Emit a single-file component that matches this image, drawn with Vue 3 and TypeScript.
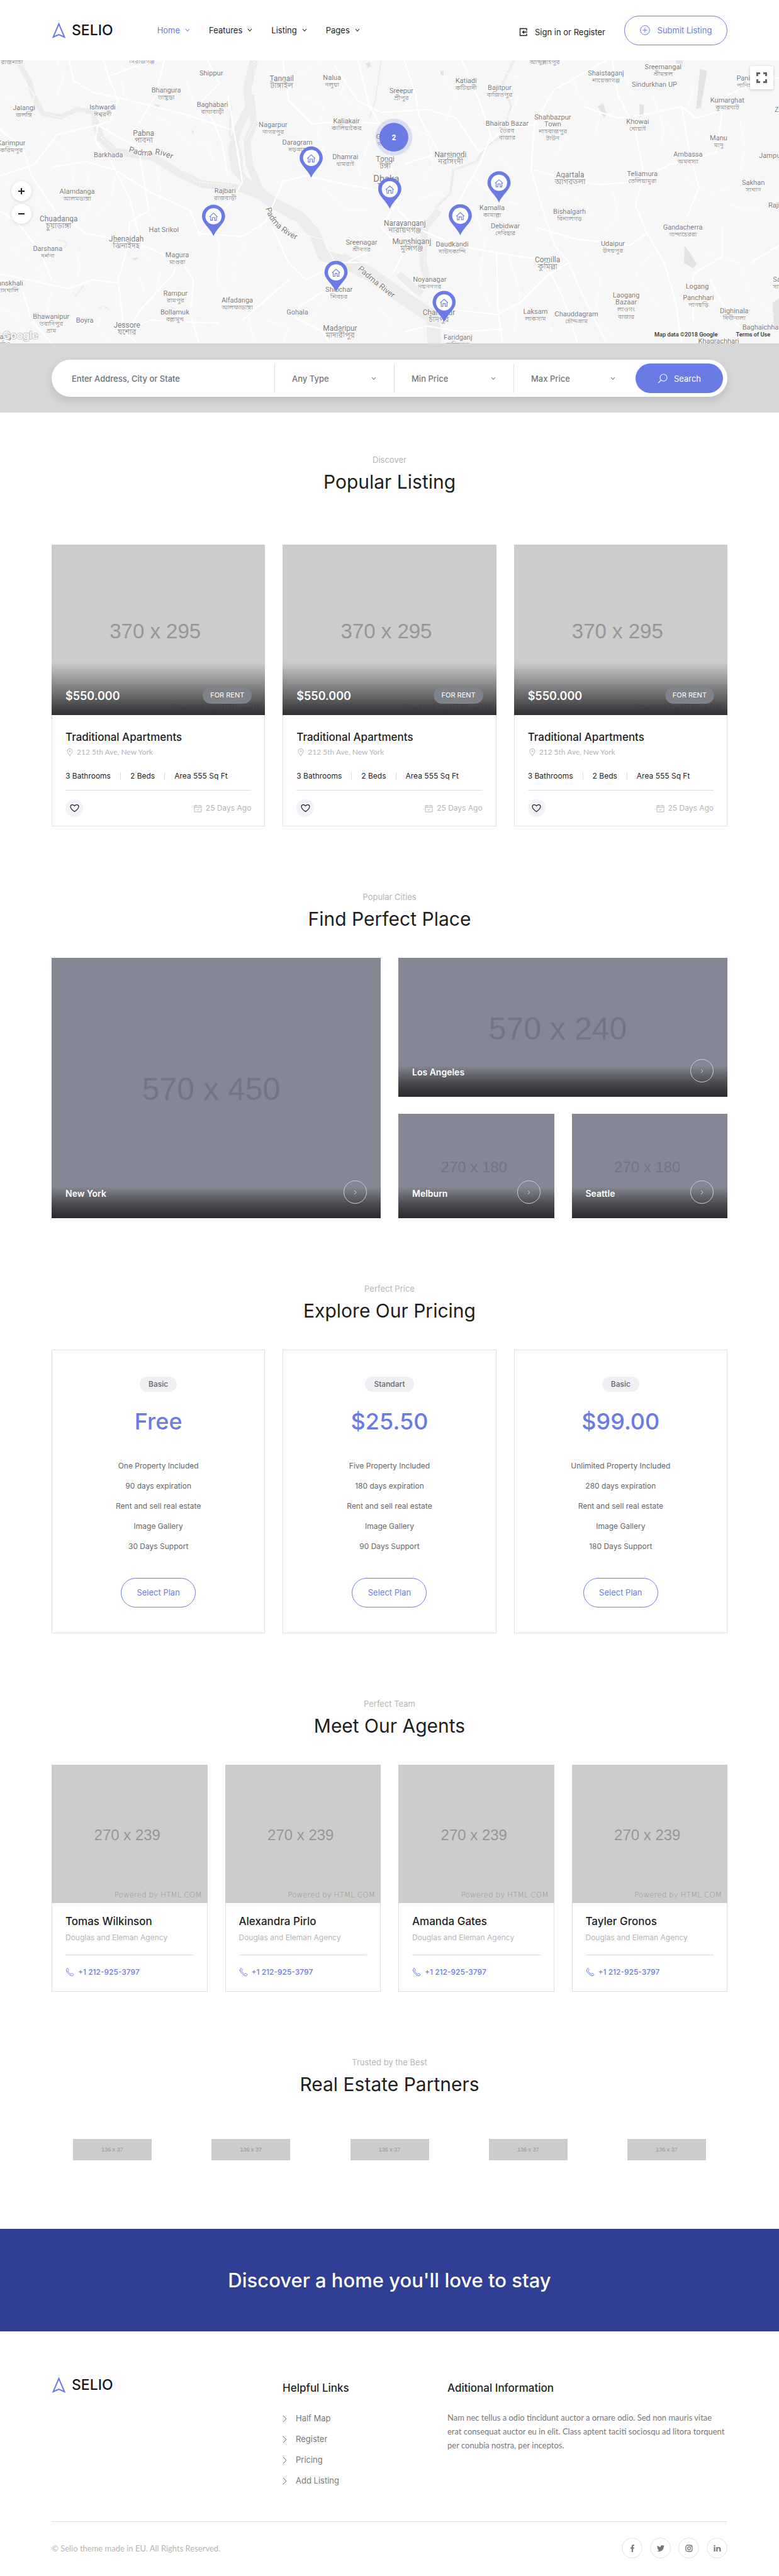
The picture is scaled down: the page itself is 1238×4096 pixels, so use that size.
<script setup lang="ts">
interface MapLabel {
  x: number
  y: number
  lines: string[]
  local?: string[]
  size?: 'big' | 'city'
  start?: boolean
}

const labels: MapLabel[] = [
  { x: 21, y: -9, lines: [], local: ['রাজশাহী'] },
  { x: 246, y: -11, lines: [], local: ['সিরাজগঞ্জ'] },
  { x: 943, y: -10, lines: [], local: ['আব্দুল্লাহপুর'] },
  { x: 366, y: 22, lines: ['Shippur'] },
  { x: 488, y: 32, lines: ['Tangail'], local: ['টাঙ্গাইল'], size: 'big' },
  { x: 575, y: 30, lines: ['Nalua'], local: ['নলুয়া'] },
  { x: 288, y: 51, lines: ['Bhangura'], local: ['ভাঙ্গুড়া'] },
  { x: 368, y: 77, lines: ['Baghabari'], local: ['বাঘাবাড়ী'] },
  { x: 42, y: 82, lines: ['Jalangi'], local: ['জলঙ্গি'] },
  { x: 178, y: 81, lines: ['Ishwardi'], local: ['ঈশ্বরদী'] },
  { x: 473, y: 111, lines: ['Nagarpur'], local: ['নাগরপুর'] },
  { x: 600, y: 105, lines: ['Kaliakair'], local: ['কালিয়াকৈর'] },
  { x: 249, y: 127, lines: ['Pabna'], local: ['পাবনা'], size: 'big' },
  { x: 20, y: 143, lines: ['Karimpur'], local: ['করিমপুর'] },
  { x: 188, y: 164, lines: ['Barkhada'] },
  { x: 515, y: 142, lines: ['Daragram'], local: ['দড়গ্রাম'] },
  { x: 598, y: 167, lines: ['Dhamrai'], local: ['ধামরাই'] },
  { x: 672, y: 132, lines: ['Gazipur'], local: ['গাজীপুর'] },
  { x: 667, y: 171, lines: ['Tongi'], local: ['টঙ্গী'], size: 'big' },
  { x: 669, y: 206, lines: ['Dhaka'], local: ['ঢাকা'], size: 'city' },
  { x: 134, y: 227, lines: ['Alamdanga'], local: ['আলমডাঙ্গা'] },
  { x: 390, y: 226, lines: ['Rajbari'], local: ['রাজবাড়ী'] },
  { x: 1148, y: 11, lines: ['Sreemangal'], local: ['শ্রীমঙ্গল'] },
  { x: 1049, y: 22, lines: ['Shaistaganj'], local: ['শায়েস্তাগঞ্জ'] },
  { x: 1133, y: 42, lines: ['Sindurkhan UP'] },
  { x: 807, y: 35, lines: ['Katiadi'], local: ['কটিয়াদী'] },
  { x: 865, y: 47, lines: ['Bajitpur'], local: ['বাজিতপুর'] },
  { x: 1275, y: 31, lines: ['Panisagar'], local: ['পানিসাগর'], start: true },
  { x: 695, y: 53, lines: ['Sreepur'], local: ['শ্রীপুর'] },
  { x: 1259, y: 69, lines: ['Kumarghat'], local: ['কুমারঘাট'] },
  { x: 1341, y: 85, lines: ['Zampui'], start: true },
  { x: 957, y: 98, lines: ['Shahbazpur', 'Town'], local: ['শাহবাজপুর', 'টাউন'] },
  { x: 1104, y: 106, lines: ['Khowai'], local: ['খোয়াই'] },
  { x: 878, y: 109, lines: ['Bhairab Bazar'], local: ['ভৈরব', 'বাজার'] },
  { x: 1244, y: 134, lines: ['Manu'], local: ['মানু'] },
  { x: 1191, y: 163, lines: ['Ambassa'], local: ['অমবস্যা'] },
  { x: 1314, y: 165, lines: ['Jampui Hills'], start: true },
  { x: 780, y: 164, lines: ['Narsingdi'], local: ['নরসিংদী'], size: 'big' },
  { x: 987, y: 199, lines: ['Agartala'], local: ['আগরতলা'], size: 'big' },
  { x: 1112, y: 196, lines: ['Teliamura'], local: ['তেলিয়ামুরা'] },
  { x: 1304, y: 212, lines: ['Sakhan'], local: ['সাখান'] },
  { x: 852, y: 255, lines: ['Kamalla'], local: ['কামাল্লা'] },
  { x: 102, y: 275, lines: ['Chuadanga'], local: ['চুয়াডাঙ্গা'], size: 'big' },
  { x: 284, y: 293, lines: ['Hat Srikol'] },
  { x: 219, y: 310, lines: ['Jhenaidah'], local: ['ঝিনাইদহ'], size: 'big' },
  { x: 83, y: 326, lines: ['Darshana'], local: ['দর্শনা'] },
  { x: 307, y: 337, lines: ['Magura'], local: ['মাগুরা'] },
  { x: 14, y: 386, lines: ['Hanskhali'], local: ['হাঁসখালি'] },
  { x: 304, y: 403, lines: ['Rampur'], local: ['রামপুর'] },
  { x: 411, y: 415, lines: ['Alfadanga'], local: ['আলফাডাঙ্গা'] },
  { x: 515, y: 436, lines: ['Gohala'] },
  { x: 303, y: 436, lines: ['Bollamuk'], local: ['বল্লামুখ'] },
  { x: 89, y: 444, lines: ['Bhawanipur'], local: ['ভবানিপুর', 'গ্রাম'] },
  { x: 147, y: 450, lines: ['Boyra'] },
  { x: 220, y: 459, lines: ['Jessore'], local: ['যশোর'], size: 'big' },
  { x: 589, y: 464, lines: ['Madaripur'], local: ['মাদারীপুর'], size: 'big' },
  { x: 587, y: 397, lines: ['Shibchar'], local: ['শিবচর'] },
  { x: 626, y: 315, lines: ['Sreenagar'], local: ['শ্রীনগর'] },
  { x: 0, y: 478, lines: ['angs'], local: ['গাঁও'], start: true },
  { x: 701, y: 282, lines: ['Narayanganj'], local: ['নারায়ণগঞ্জ'], size: 'big' },
  { x: 713, y: 314, lines: ['Munshiganj'], local: ['মুন্সিগঞ্জ'], size: 'big' },
  { x: 783, y: 318, lines: ['Daudkandi'], local: ['দাউদকান্দি'] },
  { x: 875, y: 287, lines: ['Debidwar'], local: ['দেবিদ্বার'] },
  { x: 986, y: 262, lines: ['Bishalgarh'], local: ['বিশালগড়'] },
  { x: 1330, y: 251, lines: ['Rajib'], start: true },
  { x: 1182, y: 289, lines: ['Gandacherra'], local: ['গান্দাচেররা'] },
  { x: 1061, y: 317, lines: ['Udaipur'], local: ['উদয়পুর'] },
  { x: 948, y: 346, lines: ['Comilla'], local: ['কুমিল্লা'], size: 'big' },
  { x: 744, y: 379, lines: ['Noyanagar'], local: ['নয়ননগর'] },
  { x: 1207, y: 391, lines: ['Logang'] },
  { x: 1084, y: 407, lines: ['Laogang', 'Bazaar'], local: ['লাওগং', 'বাজার'] },
  { x: 1209, y: 411, lines: ['Panchhari'], local: ['পানছড়ি'] },
  { x: 760, y: 437, lines: ['Chandpur'], local: ['চাঁদপুর'], size: 'big' },
  { x: 927, y: 435, lines: ['Laksam'], local: ['লাকসাম'] },
  { x: 998, y: 439, lines: ['Chauddagram'], local: ['চৌদ্দগ্রাম'] },
  { x: 1271, y: 434, lines: ['Dighinala'], local: ['দিঘীনালা'] },
  { x: 1285, y: 462, lines: ['Baghaichhari'], start: true },
  { x: 1244, y: 486, lines: ['Khagrachhari'] },
  { x: 793, y: 479, lines: ['Faridganj'], local: ['ফরিদগঞ্জ'] },
  { x: 1338, y: 379, lines: ['Sajek'], local: ['সাজেক'], start: true },
]

const pins = [
  [539, 149],
  [675, 203],
  [864, 192],
  [370, 250],
  [797, 249],
  [582, 347],
  [769, 399],
]

const roads: string[] = [
  'M120 0 L128 35 L160 55 L220 68 L330 96 L400 120',
  'M180 0 L188 28 L240 8 L280 0',
  'M188 28 L205 70 L190 105 L170 112 L100 128 L60 180 L0 200',
  'M170 112 L210 135 L240 150 L250 210 L258 260 L225 280 L222 320 L205 380 L215 470 L240 490',
  'M170 112 L165 140 L190 170 L225 240 L240 300',
  'M285 0 L270 60 L240 110',
  'M360 0 L380 40 L350 70 L372 110 L385 145 L395 200',
  'M0 120 L40 150 L55 200 L95 260 L150 300 L205 310 L260 325 L300 345',
  'M90 185 L150 175 L200 190 L260 228 L330 260 L345 300 L420 305 L460 280 L490 210 L530 200 L600 215 L655 225',
  'M310 340 L300 370 L245 430 L220 470',
  'M310 340 L335 380 L330 440 L345 490',
  'M395 60 L420 210 L400 245 L345 300',
  'M470 285 L500 350 L530 380 L590 350 L640 350',
  'M560 400 L520 425 L510 445 L560 470 L570 490',
  'M420 450 L460 415 L500 380',
  'M210 470 L260 450 L310 452 L380 455',
  'M490 0 L500 70 L540 110 L600 105 L660 110 L700 130',
  'M620 0 L640 80 L670 130 L680 200 L690 260 L720 290 L790 320 L870 335 L940 345',
  'M580 10 L620 70 L660 90 L740 85 L790 100 L830 160 L870 120 L930 110',
  'M700 0 L720 60 L725 95 L760 160 L700 180',
  'M800 0 L830 70 L850 130 L830 180 L780 270',
  'M1050 0 L960 50 L925 110 L920 190 L940 260 L960 320 L985 350 L1010 410 L1050 490',
  'M1010 80 L1070 100 L1110 95 L1180 80 L1205 100 L1240 90 L1260 60 L1300 40 L1349 30',
  'M1180 80 L1190 140 L1210 220 L1190 270',
  'M925 190 L1000 210 L1040 215 L1100 210 L1160 180 L1240 160 L1250 90',
  'M930 290 L1000 310 L1090 320 L1120 300 L1150 350 L1170 420 L1180 490',
  'M1120 300 L1100 250 L1115 200 L1100 120 L1070 60 L1060 0',
  'M690 240 L660 290 L700 330 L680 370',
  'M770 430 L860 440 L900 420 L950 370 L985 350',
  'M860 330 L862 430 L870 490',
  'M940 345 L970 400 L985 440 L1000 490',
  'M1250 290 L1250 340 L1200 370 L1200 450',
  'M1230 380 L1260 440 L1300 480',
  'M1300 350 L1349 320',
  'M0 370 L50 380 L95 390 L120 395 L160 380 L205 385',
  'M40 400 L55 450 L90 490',
  'M0 260 L30 280 L70 330 L90 380',
  'M640 330 L600 350',
  'M700 470 L740 460 L800 470 L870 465',
]

const lanes: string[] = [
  'M30 20 L60 60 L45 110 L20 130 M100 0 L110 30 L95 70 M210 30 L215 60 L250 90 L300 110 M320 20 L330 60 L350 100',
  'M0 60 L30 70 L60 110 M70 120 L110 150 L130 190 L120 240 M150 190 L160 240 L140 280 L100 300 M200 200 L190 250 L160 270',
  'M270 180 L280 230 L260 270 L290 310 M300 120 L330 150 L360 140 L370 180 M10 210 L60 230 L80 270 L60 310 L20 330',
  'M20 330 L60 350 L90 400 L80 440 M130 320 L140 360 L120 400 L150 440 M240 330 L280 360 L270 400 M180 420 L170 460 L190 490',
  'M360 260 L380 320 L375 380 L400 420 M430 310 L400 360 L410 390 M470 260 L450 290 M520 300 L560 310 L580 350 L570 400 L530 460',
  'M460 20 L510 30 L560 0 M520 60 L560 80 L550 130 L570 180 M600 30 L590 60 L630 90 M640 140 L620 190 L640 230 M560 220 L600 260 L640 260',
  'M700 110 L740 130 L750 180 L730 210 M760 20 L790 60 L770 110 M720 240 L760 230 L800 250 L810 300 M640 280 L620 300 L660 330 M820 200 L860 240 L900 250',
  'M820 260 L840 310 L830 380 L850 430 M880 340 L900 400 L890 470 M960 90 L980 130 L960 170 M990 20 L1000 60 L1040 90 L1030 130 M1080 20 L1100 70',
  'M1130 60 L1150 120 L1140 160 M1160 20 L1200 50 L1190 80 M1280 100 L1290 150 L1280 200 L1320 240 M1060 220 L1070 270 L1040 300 M950 220 L1000 240 L1030 270',
  'M1010 330 L1040 380 L1030 440 L1060 480 M1130 330 L1100 370 L1140 430 M1180 200 L1230 230 L1270 220 M1260 250 L1300 260 L1349 240 M1210 330 L1280 350 L1300 410 L1340 440',
  'M1150 100 L1180 150 M940 430 L960 480 M900 60 L880 100 M1200 120 L1230 140 M430 440 L440 490 M460 450 L500 460 L490 490 M640 420 L680 450 L660 490 M590 420 L620 440',
  'M240 370 L250 400 M100 440 L130 450 M0 430 L30 440 L40 470 M690 380 L720 410 M870 20 L900 30 M860 160 L890 190 L880 220',
]

const menu = ['Home', 'Features', 'Listing', 'Pages']
const filters = ['Any Type', 'Min Price', 'Max Price']
const listings = [1, 2, 3]
const plans = [
  { tag: 'Basic', price: 'Free', items: ['One Property Included', '90 days expiration', 'Rent and sell real estate', 'Image Gallery', '30 Days Support'] },
  { tag: 'Standart', price: '$25.50', items: ['Five Property Included', '180 days expiration', 'Rent and sell real estate', 'Image Gallery', '90 Days Support'] },
  { tag: 'Basic', price: '$99.00', items: ['Unlimited Property Included', '280 days expiration', 'Rent and sell real estate', 'Image Gallery', '180 Days Support'] },
]
const cities = [
  { name: 'New York', size: '570 x 450', area: 'tall' },
  { name: 'Los Angeles', size: '570 x 240', area: 'wide' },
  { name: 'Melburn', size: '270 x 180', area: 'small' },
  { name: 'Seattle', size: '270 x 180', area: 'small' },
]
const agents = ['Tomas Wilkinson', 'Alexandra Pirlo', 'Amanda Gates', 'Tayler Gronos']
const partners = [1, 2, 3, 4, 5]
const links = ['Half Map', 'Register', 'Pricing', 'Add Listing']
</script>

<template>
  <div class="page">
    <header class="container header">
      <a class="logo" href="#">
        <svg width="23" height="26" viewBox="0 0 23 26" fill="none" stroke="#6a7be6" stroke-width="2"><path d="M11.500 3 L20.500 24 L11.500 20 L2.500 24 Z" /></svg>
        <span>SELIO</span>
      </a>
      <nav class="nav">
        <a v-for="(m, i) in menu" :key="m" href="#" :class="{ active: i === 0 }">
          {{ m }}
          <svg class="chev" width="8" height="6" viewBox="0 0 8 6"><path d="M1 1 L4 4.500 L7 1" /></svg>
        </a>
      </nav>
      <a class="signin" href="#">
        <svg width="14" height="14" viewBox="0 0 14 14" fill="none" stroke="#1e1e1e" stroke-width="1.300"><path d="M12 5 V1.500 H1.500 V12.500 H12 V9.500 M13 7 H5.500 M8 4.700 L5.500 7 L8 9.300" /></svg>
        Sign in or Register
      </a>
      <a class="submit" href="#">
        <svg width="16" height="16" viewBox="0 0 16 16" fill="none" stroke="#6a7be6" stroke-width="1"><circle cx="8" cy="8" r="7.300" /><path d="M8 4.500 V11.500 M4.500 8 H11.500" /></svg>
        Submit Listing
      </a>
    </header>

    <section class="map">
      <svg class="canvas" viewBox="0 0 1349 490" preserveAspectRatio="xMidYMid slice">
        <g class="water">
          <path stroke-width="9" d="M30 0 L52 38 L58 62 L75 92 L105 98 L135 85 L162 90 L170 130 L195 155" />
          <path stroke-width="13" d="M165 105 L175 135 L200 158 L265 167 L310 195 L350 214 L420 222 L455 236" />
          <path stroke-width="20" d="M430 215 L470 245 L520 272 L545 300 L560 338 L610 352" />
          <path stroke-width="24" d="M590 345 L640 370 L690 405 L750 445 L752 490" />
          <path stroke-width="14" d="M440 0 L428 50 L432 80 L412 120 L402 155 L408 190 L440 225" />
          <path stroke-width="12" d="M434 60 L440 110 L428 140 L432 180 L455 235" />
          <path stroke-width="4" d="M400 80 L398 130 L415 150 L420 190" />
          <path stroke-width="12" d="M760 260 L735 290 L732 350 L740 380 M690 370 L730 405" />
          <path stroke-width="4" d="M890 0 L870 40 L885 80 L870 130 L840 150 L825 175 L785 190 L780 230 L755 255" />
          <path stroke-width="2" d="M660 0 L650 70 L640 100 M145 390 L130 410 M100 310 L116 315 L112 325 M170 430 L180 425 L190 432" />
        </g>
        <g class="lakes">
          <path d="M1212 15 L1224 18 L1213 82 L1205 84 Z M1035 80 L1044 74 L1050 92 L1046 100 Z M1107 75 L1115 78 L1114 95 L1107 100 Z M1185 320 L1192 330 L1206 352 L1200 360 L1184 350 Z M268 75 L277 77 L275 83 L270 82 Z M633 5 L641 3 L642 10 L637 13 Z M331 120 L336 123 L335 129 Z M762 18 h6 v8 h-6 Z M1337 420 L1349 412 V470 L1340 460 Z M228 342 L241 342 L234 347 Z M1170 0 h12 v6 h-12 Z" />
        </g>
        <g class="lanes"><path v-for="r in lanes" :key="r" :d="r" /></g>
        <g class="roads"><path v-for="r in roads" :key="r" :d="r" /></g>
        <path class="border" d="M90 95 L110 100 L140 88 L160 95 L172 130 L200 155 M300 180 L340 210 L400 216 L430 200 L410 160 L430 130 L445 100 L440 0 M340 300 L370 310 L378 380 L400 400 L410 460 M735 310 L735 360 M780 190 L830 185 L885 85 L900 60" />
        <defs>
          <path id="river-a" d="M222 158 Q250 168 262 164 T300 172" />
          <path id="river-b" d="M460 256 Q468 292 520 314" />
          <path id="river-c" d="M619 362 Q650 390 684 415" />
        </defs>
        <text class="river"><textPath href="#river-a">Padma River</textPath></text>
        <text class="river"><textPath href="#river-b">Padma River</textPath></text>
        <text class="river"><textPath href="#river-c">Padma River</textPath></text>
        <g v-for="(l, i) in labels" :key="i" class="label" :class="[l.size, { start: l.start }]">
          <text v-for="(t, n) in l.lines" :key="t" :x="l.x" :y="l.y + 4 + n * 12">{{ t }}</text>
          <text v-for="(t, n) in l.local" :key="t" class="local" :x="l.x" :y="l.y + 4 + (l.lines.length || 1) * 12 + n * 12">{{ t }}</text>
        </g>
        <text class="google" x="5" y="482">Google</text>
        <g class="credit">
          <text x="1133" y="478">Map data ©2018 Google</text>
          <text x="1274" y="478">Terms of Use</text>
        </g>
        <g class="cluster">
          <circle cx="682" cy="133" r="32" class="halo" />
          <circle cx="682" cy="133" r="25" class="core" />
          <text x="682" y="138">2</text>
        </g>
        <g v-for="p in pins" :key="p[0]" :transform="`translate(${p[0]} ${p[1]})`">
          <path fill="#6a7be6" d="M0 54 C-6 40 -20 32 -20 20 A20 20 0 0 1 20 20 C20 32 6 40 0 54 Z" />
          <circle cy="20" r="14" fill="#fff" />
          <path fill="none" stroke="#6a7be6" stroke-width="1.200" d="M-7 21 L0 14.500 L7 21 M-5 20 V27 H-2 V22 H2 V27 H5 V20" />
        </g>
      </svg>
      <div class="zoom">
        <button type="button" aria-label="Zoom in"><svg width="12" height="12" viewBox="0 0 12 12" stroke="#222" stroke-width="2"><path d="M1 6 H11 M6 1 V11" /></svg></button>
        <button type="button" aria-label="Zoom out"><svg width="12" height="12" viewBox="0 0 12 12" stroke="#222" stroke-width="2"><path d="M1 6 H11" /></svg></button>
      </div>
      <button class="full" type="button" aria-label="Full screen">
        <svg width="17" height="17" viewBox="0 0 17 17" fill="none" stroke="#666" stroke-width="3"><path d="M1.500 6 V1.500 H6 M11 1.500 H15.500 V6 M15.500 11 V15.500 H11 M6 15.500 H1.500 V11" /></svg>
      </button>
    </section>

    <section class="search">
      <form class="bar container" @submit.prevent>
        <input type="text" aria-label="Address" placeholder="Enter Address, City or State" />
        <div v-for="f in filters" :key="f" class="filter">
          <select :aria-label="f"><option>{{ f }}</option></select>
          <svg class="chev" width="8" height="6" viewBox="0 0 8 6"><path d="M1 1 L4 4.500 L7 1" /></svg>
        </div>
        <button type="submit">
          <svg width="16" height="16" viewBox="0 0 16 16" fill="none" stroke="#fff" stroke-width="1.100"><circle cx="9.500" cy="6.500" r="5.500" /><path d="M5.500 10.500 L1 15" /></svg>
          Search
        </button>
      </form>
    </section>

    <section class="container block first">
      <div class="head"><p>Discover</p><h2>Popular Listing</h2></div>
      <div class="thirds">
        <article v-for="n in listings" :key="n" class="card">
          <div class="photo listing">
            <span class="dims">370 x 295</span>
            <span class="powered">Powered by HTML.COM</span>
            <div class="shade"><strong>$550.000</strong><span class="rent">FOR RENT</span></div>
          </div>
          <div class="info">
            <h3>Traditional Apartments</h3>
            <p class="address">
              <svg width="10" height="13" viewBox="0 0 10 13" fill="none" stroke="#b5b5b5"><path d="M5 12 C4 9 1 7 1 4.500 A4 4 0 0 1 9 4.500 C9 7 6 9 5 12 Z" /><circle cx="5" cy="4.500" r="1" /></svg>
              212 5th Ave, New York
            </p>
            <ul class="specs"><li>3 Bathrooms</li><li>2 Beds</li><li>Area 555 Sq Ft</li></ul>
            <div class="foot">
              <button type="button" class="like" aria-label="Save">
                <svg width="15" height="14" viewBox="0 0 15 14" fill="none" stroke="#222" stroke-width="1.200"><path d="M7.500 12.500 C4 10 1 7.500 1 4.700 C1 1.500 5 .3 7.500 3.500 C10 .3 14 1.500 14 4.700 C14 7.500 11 10 7.500 12.500 Z" /></svg>
              </button>
              <span class="date">
                <svg width="13" height="13" viewBox="0 0 13 13" fill="none" stroke="#b5b5b5"><path d="M1 2 H12 V12 H1 Z M1 4.500 H12 M3.500 .5 V3 M9.500 .5 V3 M4.500 8 L6 9.500 L8.500 6.500" /></svg>
                25 Days Ago
              </span>
            </div>
          </div>
        </article>
      </div>
    </section>

    <section class="container block">
      <div class="head"><p>Popular Cities</p><h2>Find Perfect Place</h2></div>
      <div class="cities">
        <a v-for="c in cities" :key="c.name" href="#" class="photo city" :class="c.area">
          <span class="dims">{{ c.size }}</span>
          <span class="powered">Powered by HTML.COM</span>
          <span class="fade"></span>
          <strong>{{ c.name }}</strong>
          <span class="go"><svg width="5" height="8" viewBox="0 0 5 8" fill="none" stroke="#cfcfd4"><path d="M1 1 L4 4 L1 7" /></svg></span>
        </a>
      </div>
    </section>

    <section class="container block">
      <div class="head"><p>Perfect Price</p><h2>Explore Our Pricing</h2></div>
      <div class="thirds">
        <article v-for="(p, i) in plans" :key="i" class="card plan">
          <span class="tag">{{ p.tag }}</span>
          <h3>{{ p.price }}</h3>
          <ul><li v-for="t in p.items" :key="t">{{ t }}</li></ul>
          <a href="#">Select Plan</a>
        </article>
      </div>
    </section>

    <section class="container block">
      <div class="head"><p>Perfect Team</p><h2>Meet Our Agents</h2></div>
      <div class="quarters">
        <article v-for="a in agents" :key="a" class="card">
          <div class="photo agent"><span class="dims">270 x 239</span><span class="powered">Powered by HTML.COM</span></div>
          <div class="bio">
            <h3>{{ a }}</h3>
            <p>Douglas and Eleman Agency</p>
            <a href="tel:+12129253797">
              <svg width="14" height="14" viewBox="0 0 14 14" fill="none" stroke="#6a7be6"><path d="M1.500 2.500 L3 1 C4 .6 5 2.500 5 3.500 C5 4.500 4 4.500 4 5.200 C4.500 7 7 9.500 8.800 10 C9.500 10 9.500 9 10.500 9 C11.500 9 13.400 10 13 11 L11.500 12.500 C8 14 0 6 1.500 2.500 Z" /></svg>
              +1 212-925-3797
            </a>
          </div>
        </article>
      </div>
    </section>

    <section class="container block last">
      <div class="head"><p>Trusted by the Best</p><h2>Real Estate Partners</h2></div>
      <div class="partners"><div v-for="n in partners" :key="n"><span>136 x 37</span></div></div>
    </section>

    <section class="banner"><h2>Discover a home you'll love to stay</h2></section>

    <footer class="container footer">
      <div class="cols">
        <a class="logo" href="#">
          <svg width="23" height="26" viewBox="0 0 23 26" fill="none" stroke="#6a7be6" stroke-width="2"><path d="M11.500 3 L20.500 24 L11.500 20 L2.500 24 Z" /></svg>
          <span>SELIO</span>
        </a>
        <div class="col">
          <h3>Helpful Links</h3>
          <ul>
            <li v-for="l in links" :key="l">
              <a href="#"><svg width="7" height="12" viewBox="0 0 7 12" fill="none" stroke="#777"><path d="M1 1 L6 6 L1 11" /></svg>{{ l }}</a>
            </li>
          </ul>
        </div>
        <div class="col">
          <h3>Aditional Information</h3>
          <p>Nam nec tellus a odio tincidunt auctor a ornare odio. Sed non mauris vitae erat consequat auctor eu in elit. Class aptent taciti sociosqu ad litora torquent per conubia nostra, per inceptos.</p>
        </div>
      </div>
      <div class="bottom">
        <p>© Selio theme made in EU. All Rights Reserved.</p>
        <div class="social">
          <a href="#" aria-label="Facebook"><svg width="12" height="12" viewBox="0 0 12 12" fill="#777"><path d="M4.800 12 V6.600 H3 V4.500 H4.800 V3 C4.800 1 6 .1 7.600 .1 L9 .2 V2 H8 C7.200 2 7 2.400 7 3 V4.500 H9 L8.700 6.600 H7 V12 Z" /></svg></a>
          <a href="#" aria-label="Twitter"><svg width="12" height="12" viewBox="0 0 12 12" fill="#777"><path d="M12 2.500 L10.800 3.600 C10.800 8 7.800 11 4 11 C2.500 11 1 10.600 0 9.900 C1.300 10 2.500 9.700 3.500 8.900 C2.400 8.800 1.500 8.100 1.200 7.100 H2.300 C1.100 6.800 .4 5.800 .4 4.600 L1.500 4.900 C.4 4.100 .1 2.700 .8 1.600 C2.100 3.100 3.900 4 5.900 4.100 C5.500 2.500 6.700 1 8.300 1 C9 1 9.700 1.300 10.100 1.800 L11.700 1.200 L10.700 2.600 Z" /></svg></a>
          <a href="#" aria-label="Instagram"><svg width="12" height="12" viewBox="0 0 12 12" fill="none" stroke="#777" stroke-width="1.300"><rect x="1" y="1" width="10" height="10" rx="3" /><circle cx="6" cy="6" r="2.400" /><circle cx="8.900" cy="3.100" r=".3" /></svg></a>
          <a href="#" aria-label="LinkedIn"><svg width="12" height="12" viewBox="0 0 12 12" fill="#777"><path d="M.5 4 H2.700 V11 H.5 Z M1.600 .8 A1.200 1.200 0 1 1 1.590 .8 Z M4.200 4 H6.300 V5 C7.500 3.300 11.500 3.300 11.500 7 V11 H9.300 V7.300 C9.300 5.200 6.400 5.300 6.400 7.300 V11 H4.200 Z" /></svg></a>
        </div>
      </div>
    </footer>
  </div>
</template>

<style>
body {
  margin: 0;
  background: #fff;
}
</style>

<style scoped>
.page {
  font-family: Inter, "Noto Sans", sans-serif;
  font-size: 13px;
  line-height: 20px;
  color: #1e1e1e;
}
.page * {
  box-sizing: border-box;
}
h2, h3, p, ul {
  margin: 0;
  padding: 0;
  font-weight: 400;
}
ul {
  list-style: none;
}
a {
  color: inherit;
  text-decoration: none;
}
button, input, select {
  font: inherit;
  border: 0;
  background: none;
  padding: 0;
}
svg {
  flex: none;
}
.container {
  width: calc(100% - 60px);
  max-width: 1074px;
  margin: 0 auto;
}
.chev {
  fill: none;
  stroke: currentColor;
  stroke-width: 1.1;
}
.header {
  display: flex;
  align-items: center;
  height: 96px;
}
.logo {
  display: flex;
  align-items: center;
  gap: 9px;
  height: 26px;
  font-size: 23px;
  font-weight: 500;
  color: #16161a;
}
.nav {
  display: flex;
  gap: 30px;
  margin-left: 70px;
}
.nav a {
  display: flex;
  align-items: center;
  gap: 8px;
}
.nav .active {
  color: #6a7be6;
}
.signin {
  display: flex;
  align-items: center;
  gap: 11px;
  margin-left: auto;
  padding-top: 5px;
}
.submit {
  display: flex;
  align-items: center;
  justify-content: center;
  gap: 12px;
  width: 164px;
  height: 47px;
  margin-left: 30px;
  border: 1px solid #6a7be6;
  border-radius: 24px;
  color: #6a7be6;
}
.map {
  position: relative;
  height: 450px;
  background: #f7f7f7;
  overflow: hidden;
}
.canvas {
  display: block;
  width: 100%;
  height: 100%;
}
.water path {
  fill: none;
  stroke: #ececec;
  stroke-linejoin: round;
}
.lakes path {
  fill: #e3e3e3;
}
.roads path {
  fill: none;
  stroke: #fff;
  stroke-width: 2.4;
  stroke-linejoin: round;
}
.lanes path {
  fill: none;
  stroke: #fdfdfd;
  stroke-width: 1.2;
}
.border {
  fill: none;
  stroke: #fff;
  stroke-width: 1.4;
  stroke-dasharray: 2 3;
}
.label text, .river {
  font-family: Roboto, "Noto Sans", "Noto Sans Bengali", sans-serif;
  font-size: 12px;
  text-anchor: middle;
  fill: #7c7c7c;
  stroke: #fff;
  stroke-width: 2px;
  paint-order: stroke;
}
.label .local {
  font-size: 11px;
  fill: #9a9a9a;
}
.label.big text {
  font-size: 13px;
}
.label.city text {
  font-size: 16px;
}
.label.start text {
  text-anchor: start;
}
.river {
  font-size: 14px;
  text-anchor: start;
}
.google {
  font-family: Inter, sans-serif;
  font-size: 18px;
  font-weight: 500;
  fill: #fff;
  stroke: #c4c4c4;
  stroke-width: 2px;
  paint-order: stroke;
}
.credit text {
  font-family: Roboto, sans-serif;
  font-size: 10px;
  font-weight: 500;
  fill: #333;
}
.halo {
  fill: #6a7be6;
  fill-opacity: .2;
}
.core {
  fill: #6a7be6;
}
.cluster text {
  font-family: Roboto, sans-serif;
  font-size: 13px;
  font-weight: 700;
  text-anchor: middle;
  fill: #fff;
}
.zoom {
  position: absolute;
  left: 18px;
  top: 192px;
  display: grid;
  gap: 4px;
}
.zoom button {
  display: grid;
  place-items: center;
  width: 32px;
  height: 32px;
  border-radius: 50%;
  background: #fff;
  box-shadow: 0 1px 4px rgba(0, 0, 0, .15);
}
.full {
  position: absolute;
  right: 9px;
  top: 9px;
  display: grid;
  place-items: center;
  width: 37px;
  height: 37px;
  border-radius: 2px;
  background: #fff;
  box-shadow: 0 1px 4px rgba(0, 0, 0, .2);
}
.search {
  height: 110px;
  padding-top: 26px;
  background: #d7d7d7;
}
.bar {
  display: flex;
  align-items: center;
  height: 59px;
  padding-right: 7px;
  border-radius: 30px;
  background: #fff;
  box-shadow: 0 6px 14px rgba(0, 0, 0, .12);
  color: #777;
}
.bar input {
  flex: 1;
  min-width: 0;
  padding-left: 32px;
  font-weight: 500;
  outline: 0;
}
.bar input::placeholder {
  color: #6c7078;
  opacity: 1;
}
.filter {
  display: flex;
  align-items: center;
  width: 190px;
  height: 47px;
  padding: 0 28px 0 27px;
  border-left: 1px solid #e0e0e4;
}
.filter select {
  flex: 1;
  height: 100%;
  appearance: none;
  color: #777;
  font-weight: 500;
}
.bar button {
  display: flex;
  align-items: center;
  justify-content: center;
  gap: 10px;
  width: 139px;
  height: 47px;
  margin-left: 4px;
  border-radius: 24px;
  background: #6a7be6;
  color: #fff;
}
.block {
  padding-top: 102px;
}
.block.first {
  padding-top: 65px;
}
.head {
  text-align: center;
  margin-bottom: 42px;
}
.first .head {
  margin-bottom: 80px;
}
.head p {
  color: #b5b5b5;
  margin-bottom: 5px;
}
.head h2 {
  font-size: 30px;
  line-height: 40px;
}
.thirds {
  display: grid;
  grid-template-columns: repeat(3, 1fr);
  gap: 28px;
}
.quarters {
  display: grid;
  grid-template-columns: repeat(4, 1fr);
  gap: 28px;
}
.card {
  display: flex;
  flex-direction: column;
}
.photo {
  position: relative;
  display: flex;
  align-items: center;
  justify-content: center;
  background: #ccc;
  color: #979797;
}
.dims {
  padding: 4px 10px 0 0;
  font-family: "Liberation Sans Narrow", "Liberation Sans", sans-serif;
  font-size: 33px;
}
.powered {
  position: absolute;
  right: 9px;
  bottom: 3px;
  font-family: "DejaVu Sans", sans-serif;
  font-size: 12px;
  font-weight: 200;
}
.listing {
  height: 271px;
}
.shade {
  position: absolute;
  inset: auto 0 0;
  display: flex;
  align-items: center;
  justify-content: space-between;
  height: 84px;
  padding: 20px 21px 0 22px;
  background: linear-gradient(rgba(38, 38, 42, 0), rgba(38, 38, 42, .95));
  color: #fff;
}
.shade strong {
  padding-top: 4px;
  font-size: 18px;
  font-weight: 600;
}
.rent {
  padding: 0 12px;
  border-radius: 14px;
  background: #808289;
  font-size: 11px;
  line-height: 27px;
}
.info {
  padding: 23px 21px 14px;
  border: 1px solid #e2e2e4;
  border-top: 0;
}
.info h3, .bio h3 {
  font-size: 17px;
  line-height: 24px;
  font-weight: 500;
}
.address {
  display: flex;
  align-items: center;
  gap: 6px;
  margin: 2px 0 18px;
  padding-left: 2px;
  font-family: Lato, sans-serif;
  font-size: 12px;
  color: #b5b5b5;
}
.specs {
  display: flex;
  align-items: center;
  padding-bottom: 12px;
  font-size: 12px;
}
.specs li + li {
  margin-left: 15px;
  padding-left: 15px;
  border-left: 1px solid #ddd;
  line-height: 12px;
}
.foot {
  display: flex;
  align-items: center;
  justify-content: space-between;
  padding-top: 14px;
  border-top: 1px solid #dcdce0;
}
.like {
  display: grid;
  place-items: center;
  width: 28px;
  height: 28px;
  border-radius: 50%;
  background: #f2f3f8;
}
.date {
  display: flex;
  align-items: center;
  gap: 6px;
  font-size: 12px;
  color: #b5b5b5;
}
.cities {
  display: grid;
  grid-template-columns: repeat(4, 1fr);
  grid-template-rows: 221px 166px;
  gap: 27px 28px;
}
.city {
  background: #858794;
  color: #737583;
  overflow: hidden;
}
.tall {
  grid-column: span 2;
  grid-row: span 2;
}
.wide {
  grid-column: span 2;
}
.city .dims {
  font-size: 50px;
  padding-right: 16px;
}
.city.small .dims {
  font-size: 24px;
  padding-right: 7px;
}
.fade {
  position: absolute;
  inset: auto 0 0;
  height: 50px;
  background: linear-gradient(rgba(38, 38, 42, 0), rgba(60, 60, 64, .8) 55%, #2a282c);
}
.city strong {
  position: absolute;
  left: 22px;
  bottom: 29px;
  font-size: 14px;
  font-weight: 600;
  color: #fff;
}
.go {
  position: absolute;
  right: 22px;
  bottom: 23px;
  display: grid;
  place-items: center;
  width: 37px;
  height: 37px;
  border: 1px solid #cfcfd4;
  border-radius: 50%;
}
.plan {
  align-items: center;
  padding: 42px 20px 40px;
  border: 1px solid #e0e0e4;
}
.tag {
  padding: 0 14px;
  border-radius: 12px;
  background: #efeff4;
  font-size: 12px;
  line-height: 24px;
  font-weight: 500;
  color: #666;
}
.plan h3 {
  margin: 25px 0 33px;
  font-size: 36px;
  line-height: 44px;
  font-weight: 500;
  color: #6a7be6;
}
.plan ul {
  font-size: 12px;
  line-height: 32px;
  text-align: center;
  color: #666;
}
.plan a {
  margin-top: 34px;
  width: 119px;
  border: 1px solid #6a7be6;
  border-radius: 24px;
  line-height: 45px;
  text-align: center;
  color: #6a7be6;
}
.agent {
  height: 220px;
}
.agent .dims {
  font-size: 24px;
  padding-right: 7px;
}
.bio {
  padding: 17px 21px 20px;
  border: 1px solid #e0e0e4;
  border-top: 0;
}
.bio p {
  margin-top: 4px;
  padding-bottom: 17px;
  border-bottom: 1px solid #dcdce0;
  font-size: 12px;
  color: #b5b5b5;
}
.bio a {
  display: flex;
  align-items: center;
  gap: 6px;
  margin-top: 17px;
  font-size: 12px;
  font-weight: 500;
  color: #6a7be6;
}
.last .head {
  margin-bottom: 67px;
}
.partners {
  display: flex;
  justify-content: space-between;
  padding: 0 34px 109px;
}
.partners div {
  display: grid;
  place-items: center;
  width: 125px;
  height: 34px;
  background: #ccc;
  color: #979797;
  font-family: "Liberation Sans Narrow", "Liberation Sans", sans-serif;
  font-size: 9px;
}
.banner {
  padding: 61px 20px;
  background: #303f94;
  text-align: center;
  color: #fff;
}
.banner h2 {
  font-size: 31px;
  line-height: 41px;
  font-weight: 500;
}
.footer {
  padding-top: 72px;
}
.cols {
  display: grid;
  grid-template-columns: 367fr 262fr 445fr;
  padding-bottom: 48px;
  border-bottom: 1px solid #dcdce6;
}
.col {
  padding-top: 6px;
  color: #777;
}
.col h3 {
  margin-bottom: 20px;
  font-size: 17px;
  line-height: 24px;
  font-weight: 500;
  color: #1e1e1e;
}
.col li a {
  display: flex;
  align-items: center;
  gap: 14px;
  line-height: 33px;
}
.col p {
  margin-top: 24px;
  font-family: Lato, sans-serif;
  font-size: 13px;
  line-height: 22px;
}
.bottom {
  display: flex;
  align-items: center;
  justify-content: space-between;
  padding: 25px 0 27px;
  color: #b5b5b5;
  font-family: Lato, sans-serif;
}
.social {
  display: flex;
  gap: 12px;
}
.social a {
  display: grid;
  place-items: center;
  width: 33px;
  height: 33px;
  border: 1px solid #e2e2e4;
  border-radius: 50%;
}
</style>
